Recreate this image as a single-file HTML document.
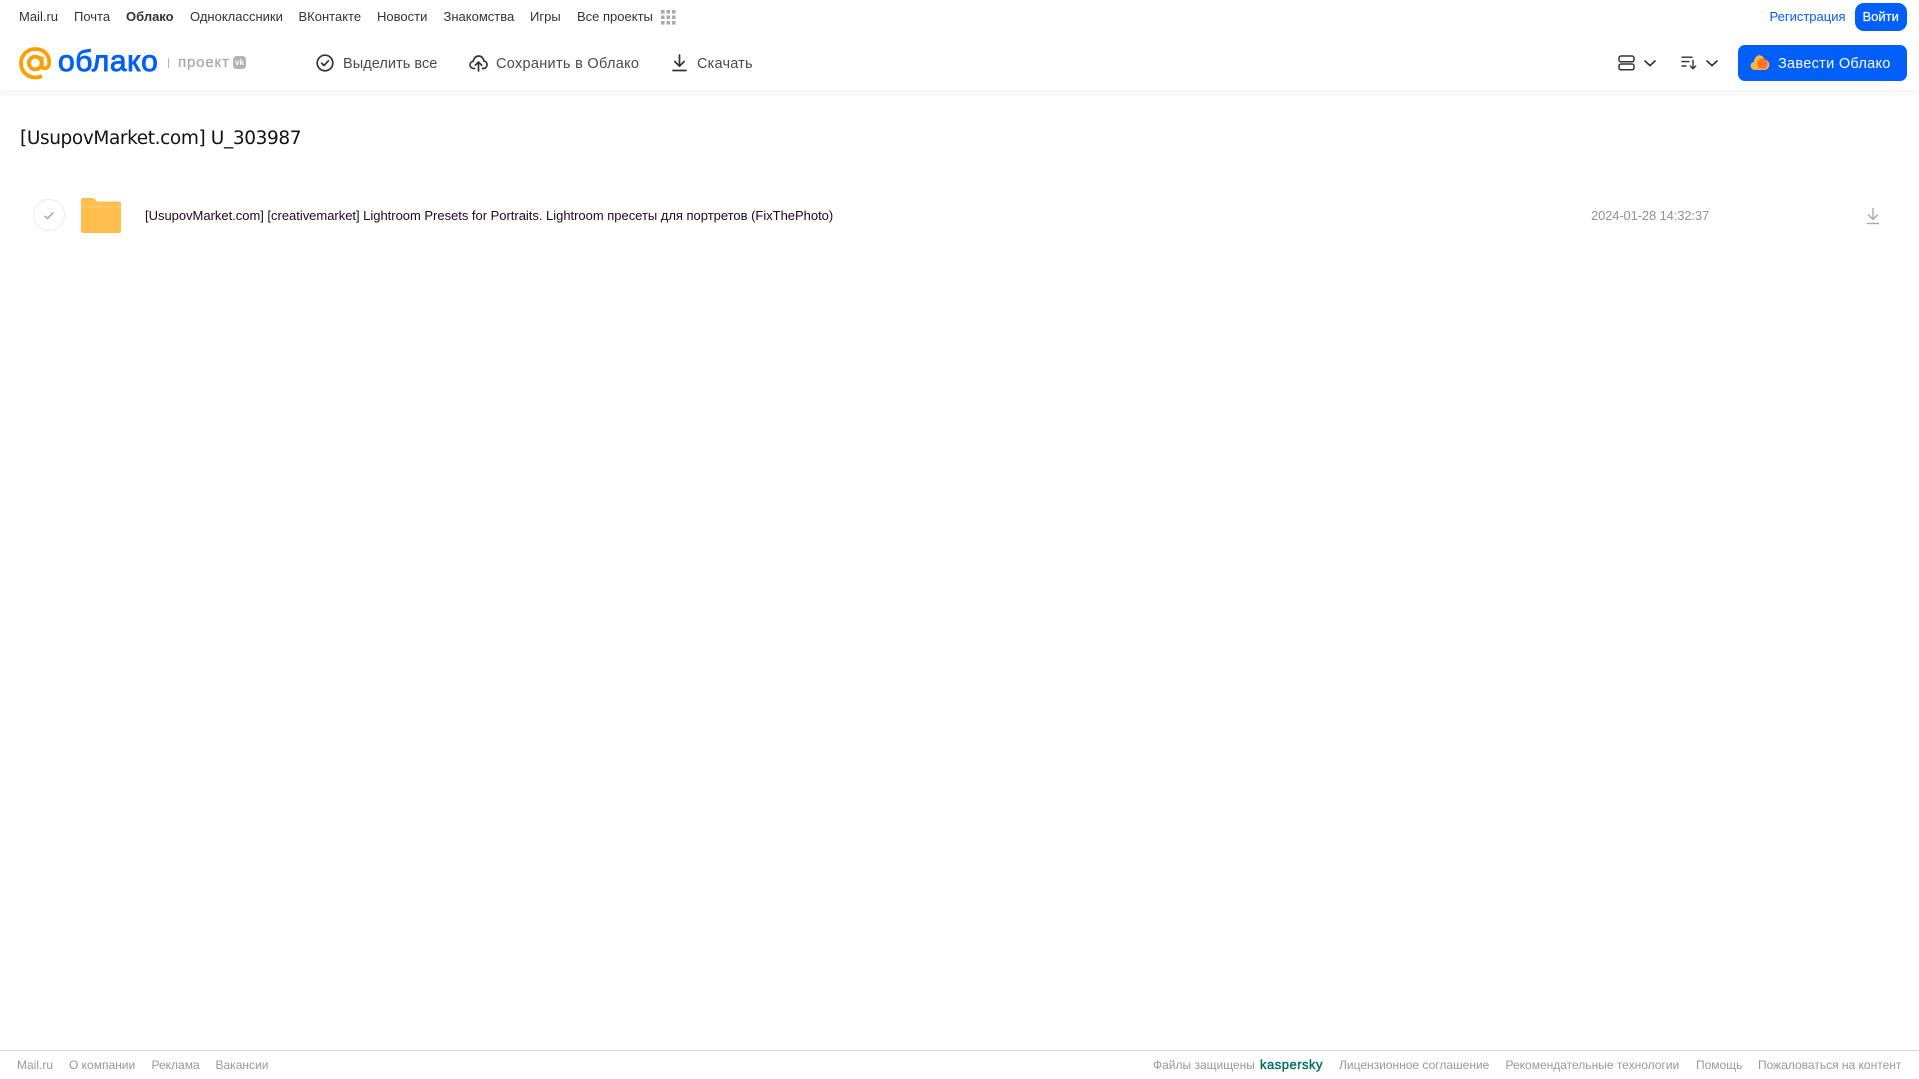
<!DOCTYPE html>
<html lang="ru">
<head>
<meta charset="utf-8">
<title>Облако</title>
<style>
html,body{margin:0;padding:0;background:#fff;width:1919px;height:1079px;overflow:hidden;font-family:"Liberation Sans",Arial,sans-serif;}
.t{position:absolute;white-space:nowrap;line-height:20px;}
.n{top:7px;font-size:13px;color:#333;}
.b{top:53.5px;font-size:14.5px;color:#4a4a4a;}
.f{top:1055px;font-size:12px;color:#999;}
svg{position:absolute;overflow:visible;}
#hdr{position:absolute;left:0;top:0;width:1919px;height:90px;background:#fff;box-shadow:0 2px 8px rgba(0,0,0,.07);}
</style>
</head>
<body>
<div id="hdr"></div>

<span class="t n" style="left:19px">Mail.ru</span>
<span class="t n" style="left:74px">Почта</span>
<span class="t n" style="left:126px;font-weight:bold">Облако</span>
<span class="t n" style="left:190px">Одноклассники</span>
<span class="t n" style="left:298.5px">ВКонтакте</span>
<span class="t n" style="left:377px">Новости</span>
<span class="t n" style="left:443.5px">Знакомства</span>
<span class="t n" style="left:530px">Игры</span>
<span class="t n" style="left:577px">Все проекты</span>
<svg style="left:661px;top:10px" width="15" height="15" fill="#aaa">
<rect x="0" y="0" width="3.6" height="3.6"/><rect x="5.5" y="0" width="3.6" height="3.6"/><rect x="11" y="0" width="3.6" height="3.6"/>
<rect x="0" y="5.5" width="3.6" height="3.6"/><rect x="5.5" y="5.5" width="3.6" height="3.6"/><rect x="11" y="5.5" width="3.6" height="3.6"/>
<rect x="0" y="11" width="3.6" height="3.6"/><rect x="5.5" y="11" width="3.6" height="3.6"/><rect x="11" y="11" width="3.6" height="3.6"/>
</svg>

<span class="t n" style="left:1769.5px;color:#005ff9">Регистрация</span>
<div style="position:absolute;left:1855px;top:3px;width:52px;height:28px;background:#005ff9;border-radius:9px"></div>
<span class="t n" style="left:1862.5px;color:#fff;-webkit-text-stroke:.2px #fff">Войти</span>

<!-- logo -->
<svg style="left:19px;top:47px" width="33" height="33" viewBox="0 0 33 33" fill="none" stroke="#ff9e00" stroke-width="3.8">
<circle cx="16.3" cy="16" r="6.4"/>
<path d="M22.7 9.5V18.5C22.7 22.5 29.8 22.5 30.2 16.5C30.8 7.5 24.5 2 16.3 2C8.3 2 2 8.3 2 16.2C2 24.5 8.5 30.5 16.3 30.5C18.8 30.5 21 30 23 29"/>
</svg>
<span class="t" style="left:58px;top:46px;line-height:32px;font-size:30px;color:#005ff9;letter-spacing:.6px;-webkit-text-stroke:.9px #005ff9">облако</span>
<div style="position:absolute;left:168px;top:58px;width:1px;height:10px;background:#b5b5b5"></div>
<span class="t" style="left:178px;top:53px;font-size:15px;color:#aaa;letter-spacing:.85px;-webkit-text-stroke:.3px #aaa">проект</span>
<div style="position:absolute;left:233px;top:56px;width:13px;height:13px;background:#b3b3b3;border-radius:3.5px"></div>
<span class="t" style="left:235px;top:52.5px;font-size:8px;font-weight:bold;color:#fff">vk</span>

<!-- toolbar -->
<svg style="left:316px;top:54px" width="18" height="18" viewBox="0 0 18 18" fill="none" stroke="#333" stroke-width="1.7">
<circle cx="9" cy="9" r="7.8"/><path d="M5.6 9.2L8 11.5L12.4 6.8" stroke-linecap="round" stroke-linejoin="round"/>
</svg>
<span class="t b" style="left:343px;letter-spacing:.05px">Выделить все</span>

<svg style="left:469px;top:54px" width="19" height="18" viewBox="0 0 19 18" fill="none" stroke="#333" stroke-width="1.7" stroke-linecap="round" stroke-linejoin="round">
<path d="M5.5 14.5H4.8C2.6 14.5 1 12.9 1 10.9C1 9 2.4 7.6 4.2 7.4C4.7 4.2 7 2 9.6 2C12.4 2 14.5 4.1 14.9 7C16.8 7.2 18 8.8 18 10.7C18 12.8 16.5 14.5 14.3 14.5H13.5"/>
<path d="M9.5 17V8.5M6.3 11.2L9.5 8L12.7 11.2"/>
</svg>
<span class="t b" style="left:496px;letter-spacing:.3px">Сохранить в Облако</span>

<svg style="left:672px;top:54px" width="15" height="18" viewBox="0 0 15 18" fill="none" stroke="#333" stroke-width="1.7" stroke-linecap="round" stroke-linejoin="round">
<path d="M7.5 1V12M2.8 7.5L7.5 12.2L12.2 7.5"/><path d="M1 16.5H14"/>
</svg>
<span class="t b" style="left:697px;letter-spacing:.2px">Скачать</span>

<svg style="left:1617.5px;top:55px" width="17" height="16" viewBox="0 0 17 16" fill="none" stroke="#333" stroke-width="1.5">
<rect x="1" y="1" width="15" height="5.8" rx="2"/><rect x="1" y="9" width="15" height="5.8" rx="2"/>
</svg>
<svg style="left:1644px;top:60px" width="12" height="7" viewBox="0 0 12 7" fill="none" stroke="#333" stroke-width="1.7" stroke-linecap="round" stroke-linejoin="round"><path d="M1 1L6 5.6L11 1"/></svg>
<svg style="left:1681px;top:56px" width="16" height="14" viewBox="0 0 16 14" fill="none" stroke="#333" stroke-width="1.4" stroke-linecap="round" stroke-linejoin="round">
<path d="M1 1.2H11M1 5.6H8M1 10H5"/><path d="M12 4.5V12.5M9.3 10L12 12.7L14.7 10"/>
</svg>
<svg style="left:1706px;top:60px" width="12" height="7" viewBox="0 0 12 7" fill="none" stroke="#333" stroke-width="1.7" stroke-linecap="round" stroke-linejoin="round"><path d="M1 1L6 5.6L11 1"/></svg>

<div style="position:absolute;left:1738px;top:45px;width:169px;height:36px;background:#005ff9;border-radius:7px"></div>
<svg style="left:1750px;top:54px" width="20" height="17" viewBox="0 0 20 17">
<path d="M5 16C2.2 16 .6 14 .6 11.8C.6 9.8 2 8.2 3.8 7.9C4.2 4 6.6 1.2 9.4 1.2C12 1.2 13.8 3 14.6 5.4C17.3 5.7 19.3 8 19.3 10.8C19.3 13.8 17 16 14.2 16Z" fill="#ffb340"/>
<circle cx="12.4" cy="9.8" r="5.2" fill="#f5762a"/>
</svg>
<span class="t b" style="left:1778px;color:#fff;letter-spacing:.3px">Завести Облако</span>

<!-- title -->
<span class="t" style="left:20px;top:126px;line-height:26px;font-family:'DejaVu Sans',sans-serif;font-size:18.5px;color:#111;letter-spacing:-.39px">[UsupovMarket.com] U_303987</span>

<!-- row -->
<div style="position:absolute;left:33px;top:199px;width:30px;height:30px;border:1px solid #ebebeb;border-radius:50%"></div>
<svg style="left:43px;top:211px" width="12" height="9" viewBox="0 0 12 9" fill="none" stroke="#999" stroke-width="1.3"><path d="M1.5 4.8L4.5 7.6L10.5 1.3"/></svg>
<svg style="left:81px;top:198px" width="40" height="35" viewBox="0 0 40 35">
<path d="M2 0H11C13 0 14 1 15 2.5C15.5 3.5 16 3.5 17 3.5H38C39.2 3.5 40 4.3 40 5.5V33C40 34.2 39.2 35 38 35H2C.8 35 0 34.2 0 33V2C0 .8 .8 0 2 0Z" fill="#ffbe4d"/>
<path d="M0 8H40V9.5H0Z" fill="#ffc86b"/>
</svg>
<span class="t" style="left:145px;top:205.5px;font-size:13px;color:#1a0a1e;letter-spacing:-.02px">[UsupovMarket.com] [creativemarket] Lightroom Presets for Portraits. Lightroom пресеты для портретов (FixThePhoto)</span>
<span class="t" style="left:1591px;top:205.5px;font-size:13px;color:#929292;letter-spacing:-.14px">2024-01-28 14:32:37</span>
<svg style="left:1866px;top:206.5px" width="14" height="18" viewBox="0 0 14 18" fill="none" stroke="#a8a8a8" stroke-width="1.4">
<path d="M7 1V12M2 7.5L7 12.3L12 7.5"/><path d="M1 16.5H13"/>
</svg>

<!-- footer -->
<div style="position:absolute;left:0;top:1050px;width:1919px;height:1px;background:#d9d9d9"></div>
<span class="t f" style="left:17px">Mail.ru</span>
<span class="t f" style="left:69px">О компании</span>
<span class="t f" style="left:151.5px">Реклама</span>
<span class="t f" style="left:215.5px">Вакансии</span>
<span class="t f" style="left:1153px">Файлы защищены</span>
<span class="t f" style="left:1260px;color:#006d5c;font-size:13px;-webkit-text-stroke:.4px #006d5c;letter-spacing:.5px">kaspersky</span>
<span class="t f" style="left:1339px">Лицензионное соглашение</span>
<span class="t f" style="left:1505.5px">Рекомендательные технологии</span>
<span class="t f" style="left:1696px">Помощь</span>
<span class="t f" style="left:1758px">Пожаловаться на контент</span>
</body>
</html>
